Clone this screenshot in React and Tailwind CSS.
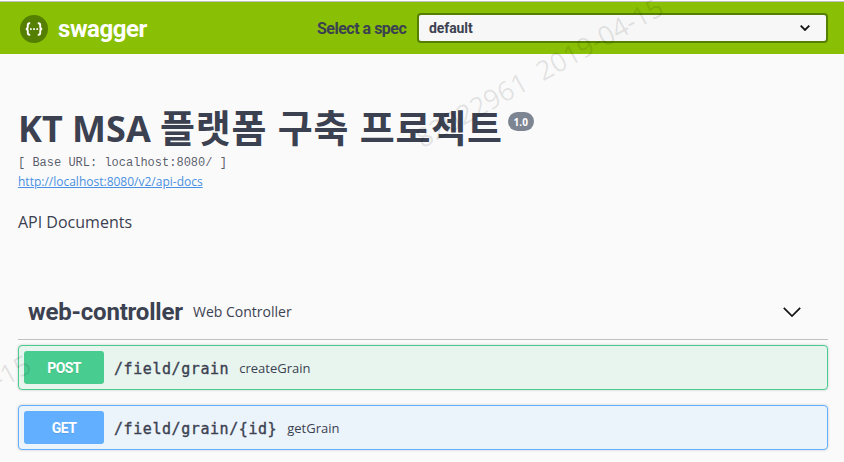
import React from "react";

const brand = "font-['Roboto','Noto_Sans_CJK_KR',sans-serif]";
const body = "font-['Open_Sans','Noto_Sans_CJK_KR',sans-serif]";

function Topbar() {
  return (
    <header className="h-[54px] border-t border-t-white bg-[#89bf04]">
      <div className="flex h-[53px] items-start border-t border-[#c0c0c0] pl-5 pr-4">
        <div className="mt-[13px] flex h-7 w-[297px] items-center">
          <svg className="h-7 w-7" viewBox="0 0 28 28" fill="none">
            <circle cx="14" cy="14" r="14" fill="#547f00" />
            <path
              d="M10.2 8.2H9.6Q7.8 8.2 7.8 10v1.8Q7.8 14 5.8 14q2 0 2 2.2V18q0 1.8 1.8 1.8h.6M17.8 8.2h.6q1.8 0 1.8 1.8v1.8q0 2.2 2 2.2-2 0-2 2.2V18q0 1.8-1.8 1.8h-.6"
              stroke="#fff"
              strokeWidth="1.9"
            />
            <path d="M10 13.2h1.7v1.7H10zM13.2 13.2h1.7v1.7h-1.7zM16.4 13.2h1.7v1.7h-1.7z" fill="#fff" />
          </svg>
          <span className={`${brand} ml-[10px] text-[24px] leading-7 font-bold tracking-[-0.45px] text-white`}>swagger</span>
        </div>
        <label className={`${brand} mt-[15px] w-[100px] shrink-0 whitespace-nowrap text-[16px] leading-6 font-bold tracking-[-0.5px] text-[#3b4151]`}>
          Select a spec
        </label>
        <div className="mt-[11px] flex h-[30px] w-[411px] items-center justify-between rounded border-2 border-[#547f00] bg-[#f7f7f7] pl-[10px] pr-4">
          <span className={`${brand} text-[14px] font-bold tracking-[-0.1px] text-[#3b4151]`}>default</span>
          <svg className="h-[6px] w-[10px]" viewBox="0 0 10 6" fill="none" stroke="#111" strokeWidth="1.8">
            <path d="M.7.7 5 5 9.3.7" />
          </svg>
        </div>
      </div>
    </header>
  );
}

function Operation({ method, path, summary, box, badge }) {
  return (
    <div className={`flex h-[45px] items-center rounded border pl-[5px] shadow-[0_0_3px_rgba(0,0,0,0.19)] ${box}`}>
      <span className={`${brand} flex h-[33px] w-20 items-center justify-center rounded-[3px] pt-[2px] text-[14px] font-bold tracking-[-0.6px] text-white [text-shadow:0_1px_0_rgba(0,0,0,0.1)] ${badge}`}>
        {method}
      </span>
      <span className="ml-[10px] whitespace-nowrap pt-[2px] font-['DejaVu_Sans_Mono',monospace] text-[15px] leading-6 tracking-[0.57px] text-[#3b4151] [-webkit-text-stroke:0.35px_#3b4151]">
        {path}
      </span>
      <span className={`${body} ml-[10px] pt-[2px] text-[13px] text-[#3b4151]`}>{summary}</span>
    </div>
  );
}

export default function App() {
  return (
    <div className="relative h-[462px] w-[844px] overflow-hidden bg-[#fafafa]">
      <Topbar />
      <main className="px-[18px] pr-4">
        <h1 className={`${body} mt-[50px] flex h-[50px] items-start whitespace-nowrap text-[36px] leading-[50px] font-bold text-[#3b4151]`}>
          <span>
            KT MSA <span className="text-[38px] leading-none tracking-[0.75px]">플랫폼 구축 프로젝트</span>
          </span>
          <span className="ml-[5px] mt-[8px] flex h-[19px] w-[26px] items-center justify-center rounded-full bg-[#7d8492] text-[10px] leading-none text-white">
            1.0
          </span>
        </h1>
        <p className="h-4 whitespace-pre font-['Liberation_Mono',monospace] text-[12px] leading-[18px] text-[#3b4151]/85">
          [ Base URL: localhost:8080/ ]
        </p>
        <a className={`${body} mt-[3px] block h-5 text-[12px] leading-[18px] text-[#4990e2] underline`}>
          http://localhost:8080/v2/api-docs
        </a>
        <p className={`${body} mt-[17px] h-6 text-[16px] leading-6 text-[#3b4151]`}>API Documents</p>
        <section className="mt-[50px]">
          <div className="flex h-[56px] items-center border-b border-[#c0c1c5] pl-[10px] pr-[27px]">
            <h2 className={`${brand} w-[165px] whitespace-nowrap text-[24px] font-bold tracking-[-0.2px] text-[#3b4151]`}>web-controller</h2>
            <span className={`${body} text-[14px] text-[#3b4151]`}>Web Controller</span>
            <svg className="ml-auto h-[10px] w-[18px]" viewBox="0 0 18 10" fill="none" stroke="#111" strokeWidth="1.7">
              <path d="M.8.8 9 9 17.2.8" />
            </svg>
          </div>
          <div className="mt-[5px] flex flex-col gap-[15px]">
            <Operation method="POST" path="/field/grain" summary="createGrain" box="border-[#49cc90] bg-[#e8f5ee]" badge="bg-[#49cc90]" />
            <Operation method="GET" path="/field/grain/{id}" summary="getGrain" box="border-[#61affe] bg-[#ebf3fb]" badge="bg-[#61affe]" />
          </div>
        </section>
      </main>
      <div className={`${body} pointer-events-none absolute left-[425px] top-[123px] origin-bottom-left rotate-[-29.1deg] whitespace-pre text-[27px] leading-[30px] font-normal text-black/10`}>
        82022961  2019-04-15
      </div>
      <div className={`${body} pointer-events-none absolute right-[808px] top-[345px] origin-bottom-right rotate-[-29.1deg] whitespace-pre text-[27px] leading-[30px] font-normal text-black/10`}>
        2019-04-15
      </div>
    </div>
  );
}
